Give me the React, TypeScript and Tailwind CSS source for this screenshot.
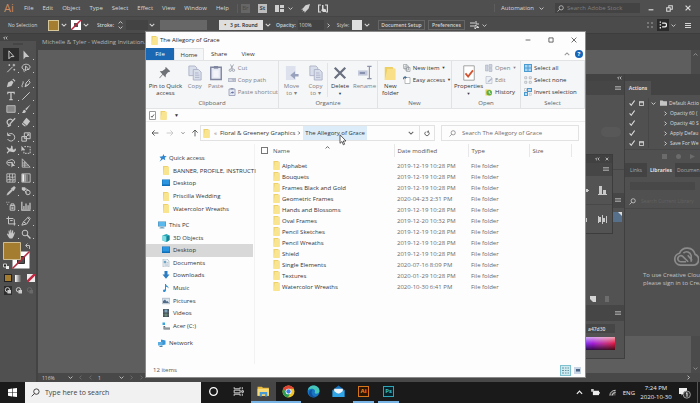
import React, { useState } from 'react';

const menus = ['File', 'Edit', 'Object', 'Type', 'Select', 'Effect', 'View', 'Window', 'Help'];

const quickAccess = [
  { name: 'BANNER, PROFILE, INSTRUCTI', icon: 'folder' },
  { name: 'Desktop', icon: 'desktop' },
  { name: 'Priscilla Wedding', icon: 'folder' },
  { name: 'Watercolor Wreaths', icon: 'folder' },
];

const thisPc = [
  { name: '3D Objects', icon: 'cube' },
  { name: 'Desktop', icon: 'desktop' },
  { name: 'Documents', icon: 'document' },
  { name: 'Downloads', icon: 'download' },
  { name: 'Music', icon: 'music' },
  { name: 'Pictures', icon: 'picture' },
  { name: 'Videos', icon: 'video' },
  { name: 'Acer (C:)', icon: 'drive' },
];

const folders = [
  { name: 'Alphabet', date: '2019-12-19 10:28 PM' },
  { name: 'Bouquets', date: '2019-12-19 10:28 PM' },
  { name: 'Frames Black and Gold', date: '2019-12-19 10:28 PM' },
  { name: 'Geometric Frames', date: '2020-04-23 2:31 PM' },
  { name: 'Hands and Blossoms', date: '2019-12-19 10:28 PM' },
  { name: 'Oval Frames', date: '2019-12-20 10:32 PM' },
  { name: 'Pencil Sketches', date: '2019-12-19 10:28 PM' },
  { name: 'Pencil Wreaths', date: '2019-12-19 10:28 PM' },
  { name: 'Shield', date: '2019-12-19 10:28 PM' },
  { name: 'Single Elements', date: '2020-07-16 8:09 PM' },
  { name: 'Textures', date: '2020-01-29 10:28 PM' },
  { name: 'Watercolor Wreaths', date: '2020-10-30 6:41 PM' },
];

const actions = [
  { name: 'Default Actio', dialog: true, set: true },
  { name: 'Opacity 60 (', dialog: false, set: false },
  { name: 'Opacity 40 S', dialog: false, set: false },
  { name: 'Apply Defau', dialog: false, set: false },
  { name: 'Save For We', dialog: true, set: false },
];

const stroke = { fill: 'none', stroke: 'currentColor', strokeWidth: 1.2 };

// Tool glyphs, all on a 12 x 12 grid
const toolGroups: { name: string; art: React.ReactNode }[][] = [
  [
    { name: 'Selection', art: <path d="M3.5 1v9.5l2.4-2.6H9.500z" {...stroke} /> },
    { name: 'Direct selection', art: <path d="M3 .5v11l2.600-3H10z" fill="currentColor" /> },
    { name: 'Magic wand', art: <path d="M1.500 11 8 4.500M9.500 1v3M8 2.500h3M4 1.500v2M3 2.500h2M10 7v2M9 8h2" {...stroke} /> },
    { name: 'Lasso', art: <path d="M4 8C1 7.500.5 5 2 3.200 4 .8 9 1 10.500 3.500c.8 1.600 0 3-1 3.500M4 8c-1 1-.5 2 .5 3M5.500 3.500v6l1.600-1.700H9.500z" {...stroke} /> },
  ],
  [
    { name: 'Pen', art: <path d="M1 11 2.500 5.500 7 3l2 2-2.500 4.500zM7.500 1.500l3 3 .8-1.200L8.800.8zM1 11l4-4" fill="currentColor" /> },
    { name: 'Curvature', art: <path d="M1.500 11C0 8 3.500 7 2.500 4M5 10.500 6 6l3-3 2 2-2.500 3.500zM9 3l1-1.500M5 10.500l2.500-3" {...stroke} /> },
    { name: 'Type', art: <path d="M1.500 1h9v3h-1L9 2.300H6.800v7.400l1.400.3v1H3.800v-1l1.400-.3V2.300H3L2.500 4h-1z" fill="currentColor" /> },
    { name: 'Line', art: <path d="M1.500 10.500l9-9" {...stroke} /> },
    { name: 'Rectangle', art: <path d="M1 2h10v8H1z" fill="#858585" stroke="currentColor" /> },
    { name: 'Paintbrush', art: <path d="M11.500.5 5 6l1.500 1.500zM4.300 6.800C2 7 3 9.500 1 10.500c2.500 1 5 0 4.800-2.200z" fill="currentColor" /> },
    { name: 'Shaper', art: <path d="M8 4.500A3.500 3.500 0 1 0 6 9.500M4.500 8.500l6.500-7M4 9l-1 2 2-1" {...stroke} strokeWidth={1.5} /> },
    { name: 'Eraser', art: <path d="M6.500 1 11 5 7 10.500 2.200 6.300zM1.800 7l4.500 4H4L1 8.500z" fill="currentColor" /> },
  ],
  [
    { name: 'Rotate', art: <path d="M2.500 3.500a4.500 4.500 0 1 1-.5 5M2 .8v3.400h3.500" {...stroke} /> },
    { name: 'Scale', art: <path d="M4 1h7v7H4zM1 5.500h5.500V11H1zM5.500 6.500l4-4M7 2.500h2.500V5" {...stroke} /> },
    { name: 'Warp', art: <path d="M.5 3C3 2 4 6 5.500 4S5 .5 7 1s0 4 2 4.500 1-2 2.500-1-1 5-4 4-4-1-5.500 2L.8 9 3 7z" fill="currentColor" /> },
    { name: 'Free transform', art: <g><path d="M4 2h7v8H3.500V6" {...stroke} strokeDasharray="2 1.200" /><path d="M.5 1v6.500L2.300 6H5z" fill="currentColor" /></g> },
    { name: 'Shape builder', art: <g><path d="M5 8.500a3 3 0 1 1-.5-5.800 3.500 3.500 0 0 1 5.500 4M2 5.500h6" {...stroke} /><path d="M6.500 4.500v7l1.800-1.800h2.600z" fill="currentColor" /></g> },
    { name: 'Perspective grid', art: <path d="M1.500 1v10h9.500L1.500 1M1.500 6h5M4.500 4v7M1.500 8.500h7.500" {...stroke} strokeWidth={1} /> },
  ],
  [
    { name: 'Mesh', art: <path d="M1 1h10v10H1zM1 5c3-2 4 1.500 10-.5M1 8.500c4-2 6 1 10-.5M4.500 1c-1.500 4 1.500 6 0 10M8 1c-1.500 4 1.500 6 0 10" {...stroke} strokeWidth={1} /> },
    { name: 'Gradient', art: <g><path d="M1 1h10v10H1z" fill="#555" stroke="#ccc" /><path d="M1.500 1.500h2.500v9H1.500z" fill="#eee" /><path d="M4 1.500h2.500v9H4z" fill="#aaa" /><path d="M6.500 1.500h2v9h-2z" fill="#808080" /></g> },
    { name: 'Eyedropper', art: <path d="M1 11l1-2.500 4.500-4.500L8 5.500 3.500 10zM6 3l1-.5L9 .8c1.500-.8 2.800.8 2 2L9.500 5l-.5 1z" fill="currentColor" stroke="currentColor" strokeWidth=".5" /> },
    { name: 'Blend', art: <g><path d="M1 1.500h4l1 3-3 1.500-2-1.500z" fill="currentColor" /><circle cx="8.300" cy="7.800" r="2.700" {...stroke} /><path d="M4 5l3 4M5.500 3l4 2.500" {...stroke} /></g> },
  ],
  [
    { name: 'Symbol sprayer', art: <path d="M5 5.500h5.500V11H5zM6 5.500V3.500h3.500v2M.5 1.500h1M3 1.500h1M1.500 4h1M6.500 7.500h2.500M6.500 9.200h2.500" {...stroke} /> },
    { name: 'Column graph', art: <path d="M1 1v10h10.500M3.500 10V6M6 10V3M8.500 10V5M10.800 10V2" {...stroke} strokeWidth={1.5} /> },
  ],
  [
    { name: 'Artboard', art: <path d="M3 .5V9.500h8.500M.5 3H8.500l1.500 1.500V11.500M5 5.500h3" {...stroke} /> },
    { name: 'Slice', art: <path d="M1 11 3 7l6-6 2 2-4 6.500zM3 7l3 2M8 2l2 2" {...stroke} /> },
    { name: 'Hand', art: <path d="M1 6l1.300-.5L3.500 7 3 2l1.200-.2.8 3.700V.8h1.200l.4 4.700L7.500 1.500l1.200.2-.3 4.300L9.800 4l1 .3L9 9l-1.500 2.500h-3L3 9.500z" fill="currentColor" /> },
    { name: 'Zoom', art: <g><circle cx="4.800" cy="4.800" r="3.400" {...stroke} /><path d="M7.300 7.300l4 4" {...stroke} strokeWidth={1.7} /></g> },
  ],
];

const Chevron: React.FC<{ dir?: string; className?: string }> = ({ dir = 'down', className = 'w-[6px] h-[6px]' }) => {
  const paths: Record<string, string> = {
    down: 'M1 2.500l3 3 3-3',
    up: 'M1 5.500l3-3 3 3',
    right: 'M2.500 1l3 3-3 3',
    left: 'M5.500 1l-3 3 3 3',
  };
  return (
    <svg viewBox="0 0 8 8" className={`shrink-0 ${className}`}>
      <path d={paths[dir]} fill="none" stroke="currentColor" strokeWidth="1.400" />
    </svg>
  );
};

const Folder: React.FC<{ className?: string }> = ({ className = 'w-[7px] h-[9px]' }) => (
  <svg viewBox="0 0 7 9" className={`shrink-0 ${className}`}>
    <path d="M.5 0H5l.6.8H6.500V8.500H.5z" fill="#ecd06b" />
    <path d="M1.800 1H6.500v8H.5z" fill="#f9e48f" />
  </svg>
);

const Magnifier: React.FC<{ className?: string }> = ({ className = 'w-[7px] h-[7px]' }) => (
  <svg viewBox="0 0 10 10" className={`shrink-0 ${className}`}>
    <circle cx="6" cy="4" r="3" fill="none" stroke="currentColor" />
    <path d="M3.900 6.100L.7 9.300" stroke="currentColor" />
  </svg>
);

const PanelMenu: React.FC = () => (
  <button aria-label="Panel menu" className="text-[#959595]">
    <svg viewBox="0 0 6 5" className="w-[6px] h-[5px]">
      <path d="M0 .5h6M0 2h6M0 3.500h6" stroke="currentColor" />
    </svg>
  </button>
);

const Collapse: React.FC = () => (
  <svg viewBox="0 0 6 4" className="w-[5px] h-[4px] shrink-0">
    <path d="M2.500.3L.8 2l1.700 1.700M5.200.3L3.500 2l1.700 1.700" fill="none" stroke="#d5d5d5" />
  </svg>
);

const NavIcon: React.FC<{ icon: string }> = ({ icon }) => {
  if (icon === 'folder') return <Folder className="w-[8px] h-[9px]" />;
  return (
    <svg viewBox="0 0 16 16" className="w-[8px] h-[8px] shrink-0">
      {icon === 'star' && <path d="M9 0l1.500 4 5 .5-4 3 1 5-4.500-2.500L1 15.500l3.500-6L1 5.500l6-1z" fill="#2f86cf" />}
      {icon === 'pc' && <g><path d="M0 1h16v10H0z" fill="#4e86ad" /><path d="M1 2h14v8H1z" fill="#5bb8ec" /><path d="M5 12h6v1h2v2H3v-2h2z" fill="#7ba6c2" /></g>}
      {icon === 'desktop' && <g><path d="M0 1h16v13H0z" fill="#0f6fb9" /><path d="M1 2h14v9H1z" fill="#2b95e0" /></g>}
      {icon === 'cube' && <g><path d="M1 3l8-3 6 3v9l-6 4-8-3z" fill="#2ba8b8" /><path d="M1 3l8 2v11l-8-3z" fill="#7fdde4" /><path d="M9 5l6-2v9l-6 4z" fill="#168294" /></g>}
      {icon === 'document' && <g><path d="M2 0h8l4 4v12H2z" fill="#eef2f5" stroke="#8fa0ad" /><path d="M4 4h4v4H4zM5 10h7M5 12.500h7M9.500 7h3" fill="#5aa0cf" stroke="#8aa8bd" /></g>}
      {icon === 'download' && <path d="M5 0h6v7h4l-7 8.500L1 7h4z" fill="#2b7cc0" />}
      {icon === 'music' && <path d="M6 0h2c0 4 6 4 5 9-1-3-3-3-5-3.500V12c0 3-2 4-4 4s-3-3-1-4.500c1-.8 2-.8 3-.5z" fill="#2e8fd6" />}
      {icon === 'picture' && <g><path d="M.5 2.500h15v11H.5z" fill="#d8e4ee" stroke="#8494a5" /><path d="M2 12V8l4-3 3 4 2-1 3 4z" fill="#506b8a" /></g>}
      {icon === 'video' && <g><path d="M2 0h12v16H2z" fill="#3c4650" /><path d="M5 1h6v6H5z" fill="#7ea5b8" /><path d="M5 9h6v6H5z" fill="#688b75" /><path d="M3.500 1v14M12.500 1v14" stroke="#aab" strokeDasharray="1.500 1.500" /></g>}
      {icon === 'drive' && <g><path d="M1 1h5v5H1z" fill="#37a5dc" /><path d="M3 8h3l1 3h9v4H3z" fill="#5f686e" /><path d="M4 11h12v2H4z" fill="#bfc7cb" /></g>}
      {icon === 'network' && <g><path d="M6 1l9 2v8l-9 2z" fill="#3a95d6" /><path d="M0 6h9v7H0z" fill="#5aaee2" /><path d="M3 14h6v2H3z" fill="#57809c" /></g>}
    </svg>
  );
};

const BigButton: React.FC<{ label: string[]; width: string; muted?: boolean; arrow?: boolean; children: React.ReactNode }> = ({
  label, width, muted, arrow, children,
}) => (
  <button className={`flex flex-col items-center justify-start pt-[4px] leading-[7px] whitespace-nowrap ${width} ${muted ? 'text-[#7d7f85]' : 'text-[#333]'}`}>
    <svg viewBox="0 0 16 18" className="w-[14px] h-[16px] mb-[2px]">{children}</svg>
    {label.map((line) => <span key={line}>{line}</span>)}
    {arrow && <span className="text-[4px]">▼</span>}
  </button>
);

const SmallButton: React.FC<{ label: string; muted?: boolean; arrow?: boolean; children: React.ReactNode }> = ({
  label, muted, arrow, children,
}) => (
  <button className={`flex items-center gap-[2px] h-[12px] whitespace-nowrap ${muted ? 'text-[#7d7f85]' : 'text-[#333]'}`}>
    <svg viewBox="0 0 16 16" className="w-[8px] h-[8px] shrink-0">{children}</svg>
    {label}
    {arrow && <span className="text-[4px]">▼</span>}
  </button>
);

const RibbonGroup: React.FC<{ title: string; width: string; children: React.ReactNode }> = ({ title, width, children }) => (
  <section className={`flex flex-col border-r border-[#e0e2e4] ${width}`}>
    <div className="flex flex-1">{children}</div>
    <h3 className="h-[9px] leading-[8px] text-center text-[#5c5f63]">{title}</h3>
  </section>
);

const pages = (
  <g stroke="#aab0c6" fill="#d9deeb">
    <path d="M1 1h7l2 2v9H1z" />
    <path d="M6 5h6l3 3v9H6z" />
    <path d="M8 9h4M8 11.500h5M8 14h5" />
  </g>
);

const Ribbon: React.FC = () => (
  <div className="flex h-[49px] bg-[#f5f6f7] border-y border-[#e1e3e5]">
    <RibbonGroup title="Clipboard" width="w-[133px]">
      <BigButton label={['Pin to Quick', 'access']} width="w-[39px]">
        <path d="M9 2l5 5-1.500 1-.8-.2L9 11l-.3 3L5.500 11 2 15l-.5-.5L5 10.500 2 7l3-.2L8.500 4l-.2-1z" fill="#6f7277" />
      </BigButton>
      <BigButton label={['Copy']} width="w-[20px]" muted>{pages}</BigButton>
      <BigButton label={['Paste']} width="w-[22px]" muted>
        <path d="M2 2.500h12v14H2z" fill="#e4e8f2" stroke="#8086a0" strokeWidth="1.600" />
        <path d="M5.500 1h5v3h-5z" fill="#8086a0" />
        <path d="M5 6h6v8H5z" fill="#f2f4fa" />
      </BigButton>
      <div className="flex flex-col pt-[1px] pl-[1px]">
        <SmallButton label="Cut" muted>
          <path d="M5 1l4 9M11 1L6 10" stroke="#8a8f9f" strokeWidth="1.500" />
          <circle cx="4.500" cy="12.500" r="2.300" fill="none" stroke="#8a8f9f" strokeWidth="1.500" />
          <circle cx="11" cy="12.500" r="2.300" fill="none" stroke="#8a8f9f" strokeWidth="1.500" />
        </SmallButton>
        <SmallButton label="Copy path" muted>
          <path d="M0 4h16v8H0z" fill="#b4bac9" />
          <path d="M2 6l2 4 2-4 1 4M9 9h1M12 9h1" fill="none" stroke="#fff" />
        </SmallButton>
        <SmallButton label="Paste shortcut" muted>
          <path d="M2 2h12v13H2z" fill="#e7ebf5" stroke="#8c93ad" strokeWidth="1.500" />
          <path d="M5 0h6v3H5z" fill="#8c93ad" />
          <path d="M5 12c0-3 1-4 4-4V6l3 3-3 3v-2c-2 0-3 0-4 2z" fill="#6675a6" />
        </SmallButton>
      </div>
    </RibbonGroup>
    <RibbonGroup title="Organize" width="w-[99px]">
      <BigButton label={['Move', 'to ▾']} width="w-[25px]" muted>
        <path d="M1 1h11v16H1z" fill="#dde1ed" />
        <path d="M15.500 10h-4V7L6 11.500l5.500 4.500v-3h4z" fill="#98a1bd" />
      </BigButton>
      <BigButton label={['Copy', 'to ▾']} width="w-[23px]" muted>{pages}</BigButton>
      <div className="w-px h-[34px] mt-[2px] bg-[#e2e4e6]" />
      <BigButton label={['Delete']} width="w-[24px]" arrow>
        <path d="M2 3l12 12M14 3L2 15" stroke="#6b7080" strokeWidth="2.600" />
      </BigButton>
      <BigButton label={['Rename']} width="w-[25px]" muted>
        <path d="M0 6h11v6H0z" fill="#c4cadb" />
        <path d="M2 9h6" stroke="#7f89a8" strokeWidth="2" />
        <path d="M10.500 1.500h5M13 1.500v14M10.500 15.500h5" stroke="#8d94a8" strokeWidth="1.300" />
      </BigButton>
    </RibbonGroup>
    <RibbonGroup title="New" width="w-[74px]">
      <BigButton label={['New', 'folder']} width="w-[25px]">
        <path d="M2 2h9l1 2h2v13H2z" fill="#ecce62" />
        <path d="M5 4h9v13H2z" fill="#f9e088" />
      </BigButton>
      <div className="flex flex-col pt-[1px]">
        <SmallButton label="New item" arrow>
          <path d="M1 1h7v8H1zM4 4h7v8H4zM7 7h7v8H7z" fill="#eef1f3" stroke="#8b9095" strokeWidth="1.200" />
        </SmallButton>
        <SmallButton label="Easy access" arrow>
          <path d="M4 3h10v12H4z" fill="#fff" stroke="#8b9095" strokeWidth="1.200" />
          <path d="M0 6c0-4 2-5 4-5V0l4 3-4 3V4C2 4 2 5 2 7z" fill="#456c93" />
        </SmallButton>
      </div>
    </RibbonGroup>
    <RibbonGroup title="Open" width="w-[69px]">
      <BigButton label={['Properties']} width="w-[33px]" arrow>
        <path d="M2 .8h12v16.400H2z" fill="#fff" stroke="#989898" />
        <path d="M4 9.500l3 3.500 5.500-7" fill="none" stroke="#d2522e" strokeWidth="2" />
      </BigButton>
      <div className="flex flex-col pt-[1px]">
        <SmallButton label="Open" muted arrow>
          <path d="M1 2h5v12H1zM8 1h6v6H8zM8 9h6v6H8z" fill="#cbd1df" stroke="#a2a9bb" />
        </SmallButton>
        <SmallButton label="Edit" muted>
          <path d="M2 1h9l3 3v11H2z" fill="#edf0f5" stroke="#a2a9bb" />
          <path d="M5 13l1-3 7-6 2 2-7 6z" fill="#b3bacd" />
        </SmallButton>
        <SmallButton label="History">
          <path d="M1 3h9l3 3v9H1z" fill="#e6cf56" />
          <circle cx="8.500" cy="9.500" r="5.500" fill="#5cae49" />
          <path d="M8.500 6v4l3 1" fill="none" stroke="#fff" strokeWidth="1.500" />
        </SmallButton>
      </div>
    </RibbonGroup>
    <RibbonGroup title="Select" width="flex-1">
      <div className="flex flex-col pt-[1px] pl-[3px]">
        <SmallButton label="Select all">
          <path d="M0 0h16v16H0z" fill="#4b9bd3" />
          <path d="M2 2h5v5H2zM9 2h5v5H9zM2 9h5v5H2zM9 9h5v5H9z" fill="#a9d5f2" />
        </SmallButton>
        <SmallButton label="Select none">
          <path d="M1.500 1.500h4v4h-4zM10.500 1.500h4v4h-4zM1.500 10.500h4v4h-4zM10.500 10.500h4v4h-4z" fill="#fff" stroke="#9ba3ab" strokeWidth="1.300" />
        </SmallButton>
        <SmallButton label="Invert selection">
          <path d="M6 0h10v8H6zM0 8h8v8H0z" fill="#4b9bd3" />
          <path d="M8 2h6v4H8zM2 10h4v4H2z" fill="#b9def5" />
          <path d="M1 1h4v5H1zM10.500 10.500h4v4h-4z" fill="#fff" stroke="#9ba3ab" />
        </SmallButton>
      </div>
    </RibbonGroup>
  </div>
);

const Explorer: React.FC = () => {
  const [location, setLocation] = useState('Desktop');

  return (
    <div className="absolute z-10 left-[145px] right-[114px] top-[31px] bottom-[25px] flex flex-col bg-[#fdfdfd] border border-[#8a8a8a] text-[6px] leading-[8px] text-[#333]">
      <header className="flex items-center h-[16px] pl-[5px]">
        <Folder />
        <h1 className="pl-[2px] text-[#222]">The Allegory of Grace</h1>
        <div className="flex ml-auto text-[#333]">
          {[
            { name: 'Minimize', d: 'M1 5h8' },
            { name: 'Maximize', d: 'M1.500 1.500h7v7h-7z' },
            { name: 'Close', d: 'M1 1l8 8M9 1L1 9' },
          ].map((b) => (
            <button key={b.name} aria-label={b.name} className="flex items-center justify-center w-[23px] h-[16px]">
              <svg viewBox="0 0 10 10" className="w-[6px] h-[6px]"><path d={b.d} {...stroke} /></svg>
            </button>
          ))}
        </div>
      </header>

      <nav className="flex items-stretch h-[12px]">
        <button className="w-[28px] bg-[#1a67b4] text-white">File</button>
        <button className="w-[30px] bg-[#f5f6f7] border-x border-t border-[#e1e3e5]">Home</button>
        <button className="w-[30px]">Share</button>
        <button className="w-[28px]">View</button>
        <div className="flex items-center gap-[5px] ml-auto pr-[2px] text-[#999]">
          <Chevron dir="up" />
          <button aria-label="Help" className="w-[8px] h-[8px] rounded-full bg-[#1665b8] text-white font-bold leading-[8px]">?</button>
        </div>
      </nav>

      <Ribbon />

      <div className="flex items-center gap-[4px] h-[13px] pl-[3px] border-b border-[#ececec]">
        <svg viewBox="0 0 7 9" className="w-[7px] h-[9px]">
          <path d="M.5.5h6v8h-6z" fill="#fff" stroke="#9a9a9a" />
          <path d="M2 5l1 1.300L5 3.500" fill="none" stroke="#666" />
        </svg>
        <Folder />
        <button aria-label="Customize" className="pl-[3px] text-[5px]">▼</button>
      </div>

      <div className="flex items-center h-[22px] pl-[5px] pr-[6px]">
        <div className="flex items-center gap-[7px] w-[49px] text-[#555]">
          <button aria-label="Back"><svg viewBox="0 0 10 8" className="w-[8px] h-[6px]"><path d="M9.500 4H1M4.500.5L1 4l3.500 3.500" {...stroke} /></svg></button>
          <button aria-label="Forward" className="text-[#c5c5c5]"><svg viewBox="0 0 10 8" className="w-[8px] h-[6px]"><path d="M.5 4H9M5.500.5L9 4 5.500 7.500" {...stroke} /></svg></button>
          <button aria-label="Recent locations"><Chevron className="w-[4px] h-[4px]" /></button>
          <button aria-label="Up"><svg viewBox="0 0 8 10" className="w-[6px] h-[8px]"><path d="M4 9.500V1M.5 4.500L4 1l3.500 3.500" {...stroke} /></svg></button>
        </div>
        <div className="flex items-center flex-1 h-[16px] pl-[2px] border border-[#e2e2e2]">
          <Folder />
          <span className="pl-[4px] pr-[3px] text-[#777]">«</span>
          <a href="#graphics" className="whitespace-nowrap">Floral &amp; Greenery Graphics</a>
          <Chevron dir="right" className="w-[4px] h-[4px] mx-[2px]" />
          <a href="#grace" className="px-[2px] leading-[14px] bg-[#dcecf8] whitespace-nowrap">The Allegory of Grace</a>
          <button aria-label="Previous locations" className="ml-auto mr-[5px] text-[#666]"><Chevron /></button>
          <button aria-label="Refresh" className="flex items-center justify-center w-[15px] h-[14px] border-l border-[#e2e2e2]">
            <svg viewBox="0 0 10 10" className="w-[6px] h-[7px]"><path d="M7 2a3.600 3.600 0 1 1-4 0M7.200 0v2.500H4.800" {...stroke} /></svg>
          </button>
        </div>
        <label className="flex items-center gap-[6px] w-[138px] h-[16px] ml-[6px] pl-[7px] border border-[#e2e2e2] text-[#777]">
          <Magnifier />
          <input aria-label="Search folder" placeholder="Search The Allegory of Grace" className="w-full min-w-0 bg-transparent outline-none placeholder:text-[#6d6d6d]" />
        </label>
      </div>

      <div className="flex flex-1 min-h-0">
        <aside className="w-[109px] shrink-0 pt-[8px] border-r border-[#f2f2f2]">
          <div className="grid auto-rows-fr h-[63px]">
            <a href="#quick" className="flex items-center gap-[2px] pl-[13px]"><NavIcon icon="star" />Quick access</a>
            {quickAccess.map((item) => (
              <a key={item.name} href="#quick" className="flex items-center gap-[3px] pl-[16px] whitespace-nowrap">
                <NavIcon icon={item.icon} />{item.name}
              </a>
            ))}
          </div>
          <div className="grid auto-rows-fr h-[113px] mt-[4px]">
            <a href="#pc" className="flex items-center gap-[3px] pl-[12px]"><NavIcon icon="pc" />This PC</a>
            {thisPc.map((item) => (
              <button
                key={item.name}
                onClick={() => setLocation(item.name)}
                className={`flex items-center gap-[3px] pl-[16px] mr-[1px] ${location === item.name ? 'bg-[#d8d8d8]' : ''}`}
              >
                <NavIcon icon={item.icon} />{item.name}
              </button>
            ))}
          </div>
          <a href="#network" className="flex items-center gap-[3px] h-[13px] mt-[4px] pl-[12px]"><NavIcon icon="network" />Network</a>
        </aside>

        <div className="flex-1 pl-[6px]">
          <table className="w-full table-fixed border-collapse text-left">
            <colgroup>
              <col className="w-[12px]" />
              <col className="w-[121px]" />
              <col className="w-[74px]" />
              <col className="w-[61px]" />
              <col className="w-[42px]" />
              <col />
            </colgroup>
            <thead>
              <tr className="h-[13px] text-[#555]">
                <th className="p-0"><input type="checkbox" aria-label="Select all items" className="block appearance-none w-[7px] h-[7px] border border-[#777]" /></th>
                <th className="p-0 font-normal border-r border-[#e8e8e8]">
                  <div className="flex items-start">
                    <span className="w-[52px]">Name</span>
                    <Chevron dir="up" className="w-[5px] h-[5px] -mt-[2px]" />
                  </div>
                </th>
                <th className="p-0 pl-[3px] font-normal border-r border-[#e8e8e8]">Date modified</th>
                <th className="p-0 pl-[3px] font-normal border-r border-[#e8e8e8]">Type</th>
                <th className="p-0 pl-[3px] font-normal border-r border-[#e8e8e8]">Size</th>
                <th className="p-0"></th>
              </tr>
              <tr className="h-[3px]"></tr>
            </thead>
            <tbody>
              {folders.map((folder) => (
                <tr key={folder.name} className="h-[11px] text-[#6a6a6a]">
                  <td className="p-0"></td>
                  <td className="p-0 text-[#333]"><div className="flex items-center gap-[2px]"><Folder />{folder.name}</div></td>
                  <td className="p-0 pl-[3px]">{folder.date}</td>
                  <td className="p-0 pl-[3px]">File folder</td>
                  <td className="p-0"></td>
                  <td className="p-0"></td>
                </tr>
              ))}
            </tbody>
          </table>
        </div>
      </div>

      <footer className="flex items-center h-[12px] pl-[7px] pr-[4px] mb-[1px] text-[#555]">
        12 items
        <div className="flex items-center gap-[3px] ml-auto">
          <button aria-label="Details view" className="w-[11px] h-[11px] bg-[#cdeaf0] border border-[#7fc1cf]">
            <svg viewBox="0 0 9 9" className="w-[9px] h-[9px]"><path d="M1 2h2M1 4.500h2M1 7h2M4 2h1.500M4 4.500h1.500M4 7h1.500M6.500 2H8M6.500 4.500H8M6.500 7H8" stroke="#6d94a0" /></svg>
          </button>
          <button aria-label="Thumbnail view" className="w-[7px] h-[7px]">
            <svg viewBox="0 0 7 7" className="w-[7px] h-[7px]"><path d="M0 0h7v7H0z" fill="#c9d6e6" /><path d="M2 2h4v2.500H2z" fill="#4a6384" /></svg>
          </button>
        </div>
      </footer>

      <svg viewBox="0 0 8 12" className="absolute left-[193px] top-[102px] w-[8px] h-[12px]">
        <path d="M1 .8v8.500l2-1.800 1.300 3.300 1.300-.6L4.300 7H7z" fill="#fff" stroke="#333" strokeWidth=".8" />
      </svg>
    </div>
  );
};

const MenuBar: React.FC = () => (
  <header className="flex items-center h-[17px] pl-[4px] bg-[#4f4f4f] border-b border-[#454545] text-[6px] leading-[8px] text-[#d9d9d9]">
    <span className="w-[20px] text-[11px] leading-[14px] text-[#d08a5c]">Ai</span>
    <nav className="flex gap-[9px]">
      {menus.map((menu) => <button key={menu}>{menu}</button>)}
    </nav>
    <div className="flex items-center gap-[8px] ml-[8px] pl-[3px] border-l border-[#5d5d5d]">
      <button className="w-[9px] h-[9px] bg-[#666] text-[#484848] leading-[9px]">Br</button>
      <button className="w-[9px] h-[9px] bg-[#bdbdbd] text-[#4a4a4a] leading-[9px] font-bold">St</button>
      <button aria-label="Arrange documents" className="flex items-center gap-[4px]">
        <svg viewBox="0 0 9 7" className="w-[9px] h-[7px]"><path d="M0 0h4v7H0zM5 0h4v3H5zM5 4h4v3H5z" fill="#cfcfcf" /></svg>
        <Chevron className="w-[5px] h-[5px]" />
      </button>
      <button aria-label="GPU performance">
        <svg viewBox="0 0 10 10" className="w-[9px] h-[9px]"><path d="M10 0L8.500 5 5 8.500 4.300 10 3.500 7.500 1.500 8.500 2.500 6.500 0 5.700 2 5 5 1.500z" fill="#cfcfcf" /></svg>
      </button>
      <button aria-label="Touch workspace">
        <svg viewBox="0 0 10 9" className="w-[10px] h-[9px]"><path d="M3 1H.6v7H3M7 1h2.400v7H8" {...stroke} /><path d="M4 1h1.500v3.500L8 5.500V8H5L3 6l1-.5z" fill="currentColor" /></svg>
      </button>
    </div>
    <div className="flex items-center ml-auto">
      <button className="flex items-center gap-[5px] pl-[6px] border-l border-[#5d5d5d]">Automation<Chevron className="w-[5px] h-[5px]" /></button>
      <label className="flex items-center gap-[3px] w-[85px] h-[10px] ml-[11px] pl-[2px] bg-[#434343]">
        <Magnifier />
        <input aria-label="Search Adobe Stock" placeholder="Search Adobe Stock" className="w-full min-w-0 bg-transparent outline-none placeholder:text-[#808080]" />
      </label>
      <div className="flex items-center gap-[12px] pl-[8px] pr-[9px]">
        <button aria-label="Minimize"><svg viewBox="0 0 10 10" className="w-[6px] h-[6px]"><path d="M1 8h8" {...stroke} strokeWidth={2} /></svg></button>
        <button aria-label="Restore"><svg viewBox="0 0 10 10" className="w-[7px] h-[7px]"><path d="M1 4h5v5H1zM4 4V1h5v5H6" {...stroke} strokeWidth={1.5} /></svg></button>
        <button aria-label="Close"><svg viewBox="0 0 10 10" className="w-[6px] h-[6px]"><path d="M1 1l8 8M9 1L1 9" {...stroke} strokeWidth={2} /></svg></button>
      </div>
    </div>
  </header>
);

const ControlBar: React.FC = () => (
  <div className="flex items-center h-[16px] pl-[8px] bg-[#4b4b4b] text-[5px] leading-[8px] text-[#d5d5d5] whitespace-nowrap">
    <span className="w-[40px]">No Selection</span>
    <button aria-label="Fill" className="flex items-center gap-[2px]">
      <span className="w-[11px] h-[11px] bg-[#a47d30] border border-[#d6c79a]" /><Chevron />
    </button>
    <button aria-label="Stroke colour" className="flex items-center gap-[2px] ml-[4px]">
      <svg viewBox="0 0 10 10" className="w-[10px] h-[10px]"><path d="M0 0h10v10H0z" fill="#fff" /><path d="M3 3h4v4H3z" fill="#555" /><path d="M0 10L10 0" stroke="#c22540" strokeWidth="1.500" /></svg>
      <Chevron />
    </button>
    <label htmlFor="stroke-width" className="w-[21px] ml-[8px] font-semibold">Stroke:</label>
    <button aria-label="Stroke stepper" className="flex flex-col"><Chevron dir="up" className="w-[5px] h-[5px]" /><Chevron className="w-[5px] h-[5px]" /></button>
    <input id="stroke-width" className="w-[22px] h-[10px] ml-[3px] bg-[#434343] outline-none" />
    <button aria-label="Stroke weights" className="ml-[1px]"><Chevron /></button>
    <button aria-label="Width profile" className="w-[47px] h-[10px] ml-[5px] bg-[#676767]" />
    <button className="w-[44px] h-[10px] ml-[12px] bg-[#dedede] text-[#222] font-semibold">•&nbsp;&nbsp; 3 pt. Round</button>
    <Chevron className="w-[6px] h-[6px] ml-[2px]" />
    <label htmlFor="opacity" className="w-[22px] ml-[5px] font-semibold">Opacity:</label>
    <input id="opacity" defaultValue="100%" className="w-[26px] h-[10px] px-[1px] bg-[#434343] outline-none" />
    <Chevron dir="right" className="w-[5px] h-[5px] ml-[2px]" />
    <button className="flex items-center gap-[2px] ml-[5px]">
      <span className="w-[14px]">Style:</span><span className="w-[10px] h-[10px] bg-[#dedede]" /><Chevron />
    </button>
    <button className="w-[47px] h-[10px] ml-[8px] leading-none border border-[#656565] font-semibold">Document Setup</button>
    <button className="w-[37px] h-[10px] ml-[3px] leading-none border border-[#656565] font-semibold">Preferences</button>
    <button aria-label="Align to" className="flex items-center gap-[3px] ml-[5px]">
      <svg viewBox="0 0 9 8" className="w-[9px] h-[8px]"><path d="M0 2h5M0 5h4M6 0v3h3M5 4v4l1.500-1.500H9z" fill="none" stroke="currentColor" /></svg>
      <Chevron className="w-[5px] h-[5px]" />
    </button>
    <div className="flex items-center ml-auto pr-[9px]">
      <svg viewBox="0 0 6 6" className="w-[6px] h-[6px] text-[#777]"><path d="M0 0h2v2H0zM4 0h2v2H4zM0 4h2v2H0zM4 4h2v2H4z" fill="currentColor" /></svg>
      <button aria-label="Snap" className="flex items-center justify-center w-[12px] h-[12px] ml-[4px] bg-[#2a2a2a]">
        <svg viewBox="0 0 9 8" className="w-[8px] h-[8px]"><path d="M1.500 0v8" stroke="#eee" strokeWidth="1.500" strokeDasharray="1.600 1.500" /><path d="M3.500 2h3a2 2 0 0 1 0 4h-3" fill="none" stroke="#eee" strokeWidth="1.400" /></svg>
      </button>
      <Chevron className="w-[5px] h-[5px] ml-[2px]" />
      <button aria-label="Control menu" className="ml-[9px]"><svg viewBox="0 0 6 5" className="w-[6px] h-[5px]"><path d="M0 .5h6M0 2.500h6M0 4.500h6" stroke="currentColor" /></svg></button>
    </div>
  </div>
);

const Toolbox: React.FC = () => (
  <aside className="flex flex-col w-[38px] shrink-0 bg-[#505050] border-r-2 border-[#434343] text-[#c6c6c6]">
    <div className="flex items-center h-[7px] pl-[3px] bg-[#434343]"><Collapse /></div>
    <div className="w-[10px] h-[2px] mx-auto mt-[2px] mb-[3px] bg-[#454545]" />
    <div className="flex flex-col gap-[2px] pl-[3px]">
      {toolGroups.map((group, i) => (
        <div key={i} className="grid grid-cols-2 w-[31px]">
          {group.map((tool) => (
            <button
              key={tool.name}
              aria-label={tool.name}
              className={`relative flex items-center justify-center h-[13px] ${tool.name === 'Selection' ? 'bg-[#2e2e2e]' : ''}`}
            >
              <svg viewBox="0 0 12 12" className="w-[10px] h-[10px]">{tool.art}</svg>
              {tool.name !== 'Selection' && <span className="absolute right-0 bottom-[1px] w-px h-px bg-[#c6c6c6]" />}
            </button>
          ))}
        </div>
      ))}
    </div>
    <svg viewBox="0 0 30 30" className="w-[30px] h-[30px] mt-[1px] ml-[2px]">
      <path d="M10.500 10.500h17v17h-17z" fill="#fff" />
      <path d="M15.500 15.500h7v7h-7z" fill="#505050" stroke="#333" />
      <path d="M10.500 27.500l17-17" stroke="#b5283d" strokeWidth="1.500" />
      <path d="M1.500 1.500h17v17h-17z" fill="#a47d30" stroke="#d0bf95" />
      <path d="M24 4.500h3.500V8M25.500 2.500L23.500 4.500l2 2" fill="none" stroke="#bbb" />
      <path d="M1.500 23h3v3h-3z" fill="#222" stroke="#ccc" />
      <path d="M4 25h3v3H4z" fill="#eee" />
    </svg>
    <div className="flex items-center gap-[3px] mt-[3px] pl-[4px]">
      <button aria-label="Colour" className="w-[8px] h-[8px] bg-[#a47d30] border border-[#222]" />
      <button aria-label="Gradient" className="w-[7px] h-[7px] bg-linear-to-r from-white to-[#444]" />
      <button aria-label="None" className="ml-[2px]"><svg viewBox="0 0 8 8" className="w-[8px] h-[8px]"><path d="M0 0h8v8H0z" fill="#eee" /><path d="M0 8L8 0" stroke="#c22540" strokeWidth="2.500" /></svg></button>
    </div>
    <div className="flex items-center gap-[3px] mt-[4px] pl-[4px]">
      {['Draw normal', 'Draw behind', 'Draw inside'].map((mode, i) => (
        <button key={mode} aria-label={mode} className={`w-[8px] h-[9px] ${i === 0 ? 'bg-[#2e2e2e]' : ''} ${i === 2 ? 'opacity-20' : ''}`}>
          <svg viewBox="0 0 8 9" className="w-[8px] h-[9px]"><circle cx="3.500" cy="3.800" r="2.200" fill="none" stroke="#ccc" /><path d="M3.500 4h3.500v3.500H3.500z" fill="#ccc" /></svg>
        </button>
      ))}
    </div>
  </aside>
);

const AlignPanel: React.FC = () => (
  <section className="absolute z-[5] right-[87px] top-[120px] w-[60px] h-[80px] bg-[#535353] border border-[#3c3c3c] text-[#c9c9c9]">
    <div className="flex items-center justify-end gap-[5px] h-[8px] pr-[3px] bg-[#414141]">
      <Collapse />
      <button aria-label="Close panel"><svg viewBox="0 0 6 6" className="w-[4px] h-[4px]"><path d="M1 1l4 4M5 1L1 5" {...stroke} /></svg></button>
    </div>
    <div className="flex items-center justify-end h-[13px] pr-[3px] bg-[#464646]"><PanelMenu /></div>
    <div className="flex justify-end items-center gap-[9px] h-[29px] pr-[5px] border-b border-[#484848]">
      <svg viewBox="0 0 9 9" className="w-[9px] h-[9px]"><path d="M0 4.500h9" stroke="currentColor" /><path d="M1 1h3v7H1zM5 3h3v3H5z" fill="currentColor" /></svg>
      <svg viewBox="0 0 9 9" className="w-[9px] h-[9px]"><path d="M0 8.500h9" stroke="currentColor" /><path d="M1 0h3v8H1zM5 4h3v4H5z" fill="currentColor" /></svg>
    </div>
    <div className="flex justify-end items-center gap-[9px] h-[28px] pr-[5px]">
      <svg viewBox="0 0 9 9" className="w-[9px] h-[9px]"><path d="M4.500 0v9" stroke="currentColor" /><path d="M2 3h5v4H2z" fill="currentColor" /></svg>
      <svg viewBox="0 0 9 9" className="w-[9px] h-[9px]"><path d="M.5 1v7M4.500 0v9M8.500 1v7" stroke="currentColor" /><path d="M1 2h2v5H1zM5 3h2v4H5z" fill="currentColor" /></svg>
    </div>
  </section>
);

const ColourDock: React.FC = () => (
  <section className="flex flex-col w-[60px] h-[285px] bg-[#525252] border-r border-b border-[#3f3f3f] text-[5px] leading-[8px]">
    <div className="flex items-center justify-end h-[7px] pr-[2px] bg-[#434343]"><Collapse /></div>
    <div className="flex items-center justify-end h-[14px] pr-[3px] bg-[#464646]"><PanelMenu /></div>
    <div className="flex items-center h-[74px] pl-[36px]">
      <div className="w-[20px] h-[10px] rounded-full bg-[#585858]" />
    </div>
    <div className="h-[24px] border-t border-[#464646]" />
    <div className="flex items-center justify-end h-[15px] pr-[3px] bg-[#464646]"><PanelMenu /></div>
    <div className="flex justify-end h-[85px] pt-[4px] pr-[2px]">
      <svg viewBox="0 0 9 10" className="w-[9px] h-[10px]"><path d="M0 0h9v10H0z" fill="#56708c" /><path d="M5 0h4v4z" fill="#ddd" /></svg>
    </div>
    <div className="flex items-center justify-end gap-[8px] h-[12px] pr-[14px]">
      <svg viewBox="0 0 6 6" className="w-[6px] h-[6px]"><path d="M0 0h6v6H3L0 3z" fill="#d5d5d5" /></svg>
      <svg viewBox="0 0 6 6" className="w-[6px] h-[6px]"><path d="M1 0h4v6H1z" fill="#6d6d6d" /></svg>
    </div>
    <div className="flex items-center justify-end h-[16px] pr-[3px] bg-[#464646]"><PanelMenu /></div>
    <input aria-label="Hex colour" defaultValue="a47d30" className="w-[29px] h-[9px] mt-[3px] ml-[21px] pl-[2px] bg-[#464646] text-[#ddd] font-semibold outline-none" />
    <div className="w-[44px] h-[13px] mt-[4px] ml-[6px] bg-linear-to-r from-[#1f3cff] via-[#a418d8] to-[#e0123c]">
      <div className="h-full bg-linear-to-b from-white/60 via-transparent to-black/70" />
    </div>
  </section>
);

const ActionsDock: React.FC = () => (
  <section className="flex flex-col w-[75px] h-[262px] bg-[#505050] text-[6px] leading-[8px] text-[#dedede] overflow-hidden whitespace-nowrap">
    <div className="h-[7px] shrink-0 bg-[#434343]" />
    <div className="flex h-[14px] shrink-0 bg-[#434343]">
      <button className="w-[26px] bg-[#505050] text-[5px] font-bold">Actions</button>
    </div>
    <div className="flex flex-col h-[51px] shrink-0 mt-[3px]">
      {actions.map((action, i) => (
        <div key={action.name} className="flex items-center h-[10px] shrink-0">
          <span className="grid w-[14px] shrink-0 place-items-center">
            <input id={`action-${i}`} type="checkbox" defaultChecked className="peer col-start-1 row-start-1 appearance-none w-[6px] h-[6px]" />
            <svg viewBox="0 0 8 8" className="col-start-1 row-start-1 w-[6px] h-[6px] pointer-events-none invisible peer-checked:visible"><path d="M.8 4.500L3 7 7.500.8" {...stroke} strokeWidth={1.4} /></svg>
          </span>
          <span className="w-[10px] shrink-0 border-r border-[#474747] h-[10px] flex items-center">
            {action.dialog && <svg viewBox="0 0 6 6" className="w-[5px] h-[5px]"><path d="M.5.5h5v5h-5zM.5 2h5" fill="none" stroke="currentColor" /></svg>}
          </span>
          {action.set ? (
            <span className="flex items-center gap-[4px] pl-[2px] shrink-0"><Chevron className="w-[5px] h-[5px]" /><svg viewBox="0 0 8 6" className="w-[7px] h-[6px]"><path d="M0 0h3l1 1h4v5H0z" fill="#c5c5c5" /></svg></span>
          ) : (
            <span className="pl-[14px] shrink-0"><Chevron dir="right" className="w-[5px] h-[5px]" /></span>
          )}
          <label htmlFor={`action-${i}`} className="pl-[2px] text-[5px]">{action.name}</label>
        </div>
      ))}
    </div>
    <div className="flex items-center gap-[9px] h-[14px] shrink-0 pl-[37px] border-t border-[#474747] text-[#6b6b6b]">
      <svg viewBox="0 0 5 5" className="w-[5px] h-[5px]"><path d="M0 0h5v5H0z" fill="currentColor" /></svg>
      <svg viewBox="0 0 5 5" className="w-[5px] h-[5px]"><circle cx="2.500" cy="2.500" r="2.500" fill="currentColor" /></svg>
      <svg viewBox="0 0 5 5" className="w-[5px] h-[5px]"><path d="M0 0l5 2.500L0 5z" fill="currentColor" /></svg>
    </div>
    <div className="flex h-[14px] shrink-0 bg-[#434343] text-[5px]">
      <button className="w-[22px] shrink-0 text-[#aaa]">Links</button>
      <button className="w-[28px] shrink-0 bg-[#505050] font-bold">Libraries</button>
      <button className="pl-[2px] text-[#aaa]">Documen</button>
    </div>
    <div className="shrink-0 px-[5px] pt-[5px]"><div className="h-[8px] bg-[#484848]" /></div>
    <label className="flex items-center gap-[5px] h-[15px] shrink-0 mt-[4px] pl-[4px] border-b border-[#484848]">
      <Magnifier />
      <input placeholder="Search Current Library" aria-label="Search library" className="flex-1 min-w-0 text-[5px] bg-transparent outline-none placeholder:text-[#626262]" />
    </label>
    <svg viewBox="0 0 30 22" className="w-[26px] h-[20px] shrink-0 mt-[38px] ml-[48px] text-[#8b8b8b]">
      <path d="M8.500 20.500a7 7 0 0 1-1-13.800A9.500 9.500 0 0 1 25.500 8a6.500 6.500 0 0 1-2 12.500z" fill="none" stroke="currentColor" strokeWidth="2" />
      <path d="M15 16.500h-6a3.500 3.500 0 1 1 2.500-6l6 6M12 6.500c3-3 8-1.500 9 3v7M17 9l5 6" fill="none" stroke="currentColor" strokeWidth="1.900" />
    </svg>
    <p className="mt-[4px] pl-[18px] text-[#c2c2c2]">To use Creative Clou<br />please sign in to Crea</p>
  </section>
);

const TaskIcon: React.FC<{ name: string }> = ({ name }) => (
  <svg viewBox="0 0 24 24" className="w-[13px] h-[13px]">
    {name === 'Cortana' && <circle cx="12" cy="12" r="7" fill="none" stroke="#fff" strokeWidth="2.400" />}
    {name === 'Task View' && <path d="M4 4v3h11V4M4 20v-3h11v3M4 9.500h11v5H4zM19 4v4M19 16v4M18 10.500h3v3h-3z" fill="none" stroke="#ddd" strokeWidth="1.700" />}
    {name === 'File Explorer' && <g><path d="M1 3h8l2 2h11v15H1z" fill="#e9b93c" /><path d="M1 7h21v13H1z" fill="#f8dc7a" /><path d="M5 13h14v8h-4v-4H9v4H5z" fill="#4a9bd4" /></g>}
    {name === 'Chrome' && <g><circle cx="12" cy="12" r="11" fill="#f0c42d" /><path d="M2.500 6.500A11 11 0 0 1 22 7H12a5 5 0 0 0-4.500 7z" fill="#dc4437" /><path d="M2.500 6.500A11 11 0 0 0 11 23l5-8.500a5 5 0 0 1-8.500-.5z" fill="#2f9e55" /><circle cx="12" cy="12" r="5.300" fill="#fff" /><circle cx="12" cy="12" r="4" fill="#3b7ded" /></g>}
    {name === 'Edge' && <g><circle cx="12" cy="12" r="11" fill="#1874c5" /><path d="M1.500 10C3 3 8 1 12 1c7 0 11 5 11 9.500 0 4-3 5.500-6 5.500-2.500 0-3.500-1.500-2.500-3C16 10 12.500 7 9 7s-6 1.500-7.500 3z" fill="#45c6b6" /><path d="M9 11c-2 5 2 11 8 10.500-4 3-11 1.500-13-4C3 13 5 9 10 8.500" fill="#12529d" /></g>}
    {name === 'Mail' && <g><path d="M1 9l11-8 11 8v13H1z" fill="#1673bd" /><path d="M4 7h16v9H4z" fill="#eef7fd" /><path d="M1 9l11 8 11-8v13H1z" fill="#2fa4e6" /></g>}
  </svg>
);

const Taskbar: React.FC = () => (
  <footer className="relative z-20 flex items-stretch h-[21px] shrink-0 bg-[#1a1a1a] text-[6px] leading-[8px] text-[#eee]">
    <button aria-label="Start" className="flex items-center justify-center w-[25px]">
      <svg viewBox="0 0 9 9" className="w-[9px] h-[9px]"><path d="M0 1.200L4 .6v3.600H0zM4.600.5L9 0v4.200H4.600zM0 4.800h4v3.600L0 7.800zM4.600 4.800H9V9l-4.400-.5z" fill="#fff" /></svg>
    </button>
    <label className="flex items-center gap-[5px] w-[176px] pl-[6px] bg-[#f1f1f1] text-[#333]">
      <Magnifier className="w-[9px] h-[9px]" />
      <input aria-label="Search" placeholder="Type here to search" className="w-full min-w-0 text-[7px] bg-transparent outline-none placeholder:text-[#444]" />
    </label>
    {['Cortana', 'Task View', 'File Explorer', 'Chrome', 'Edge', 'Mail'].map((name) => (
      <button
        key={name}
        aria-label={name}
        className={`flex items-center justify-center w-[25px] border-b-2 ${
          name === 'File Explorer' ? 'bg-[#464646] border-[#79b4e6]' : name === 'Chrome' ? 'border-[#79b4e6]' : 'border-transparent'
        }`}
      >
        <TaskIcon name={name} />
      </button>
    ))}
    <button className="flex items-center justify-center w-[25px] px-[2px]">
      <span className="flex items-center justify-center w-full h-full border-b-2 border-[#79b4e6]"><span className="w-[11px] h-[11px] leading-[9px] border border-[#d6761b] bg-[#2c1603] text-[#ee8a1d] font-bold">Ai</span></span>
    </button>
    <button className="flex items-center justify-center w-[25px] px-[2px]">
      <span className="flex items-center justify-center w-full h-full border-b-2 border-[#79b4e6]"><span className="w-[11px] h-[11px] leading-[9px] border border-[#2ba6b8] bg-[#06222b] text-[#35bdd0] font-bold">Ps</span></span>
    </button>
    <div className="flex items-center ml-auto">
      <button aria-label="Hidden icons"><Chevron dir="up" className="w-[7px] h-[7px]" /></button>
      <svg viewBox="0 0 10 8" className="w-[9px] h-[7px] ml-[8px]"><path d="M2 2h7v5H2z" fill="#eee" /><path d="M0 0h3v3H0zM9 3.500h1v2H9z" fill="#ccc" /></svg>
      <svg viewBox="0 0 8 8" className="w-[7px] h-[7px] ml-[9px]"><path d="M.5 7.500l7-7v7z" fill="#555" /><path d="M1 7.500a6 6 0 0 1 6.500-6M3.500 7.500a4 4 0 0 1 4-3.500" fill="none" stroke="#ddd" /></svg>
      <button className="ml-[7px]">ENG</button>
      <button className="w-[36px] ml-[3px] text-center leading-[9px]">7:24 PM<br />2020-10-30</button>
      <button aria-label="Notifications" className="ml-[5px] mr-[6px]">
        <svg viewBox="0 0 12 12" className="w-[12px] h-[12px]"><path d="M0 1h8v6H4L2.500 8.500V7H0z" fill="#eee" /><circle cx="7.800" cy="7.600" r="3.600" fill="#333" stroke="#999" /><path d="M7 6.500l1-.8v4" fill="none" stroke="#eee" /></svg>
      </button>
      <div className="w-px h-[21px] mr-[2px] bg-[#555]" />
    </div>
  </footer>
);

const App: React.FC = () => (
  <div className="relative flex flex-col h-screen overflow-hidden bg-[#444] font-['Open_Sans','Noto_Sans',sans-serif]">
    <MenuBar />
    <ControlBar />
    <main className="relative flex flex-1 min-h-0 border-t border-[#3d3d3d]">
      <Toolbox />
      <div className="flex flex-col flex-1 min-w-0 bg-[#434343]">
        <div className="h-[16px] pl-[4px] text-[6px] leading-[16px] text-[#b5b5b5] whitespace-nowrap">Michelle &amp; Tyler - Wedding Invitation.</div>
        <div className="flex flex-1 min-h-0">
          <div className="flex-1 bg-[#5e5e5e]" />
          <div className="flex flex-col items-center justify-between w-[9px] py-[2px] bg-[#4b4b4b] text-[#999]">
            <Chevron dir="up" className="w-[5px] h-[5px]" />
            <Chevron className="w-[5px] h-[5px]" />
          </div>
        </div>
        <div className="flex items-center gap-[5px] h-[9px] pl-[4px] bg-[#484848] text-[5px] leading-[8px] text-[#d0d0d0]">
          <span className="w-[21px]">116%</span>
          <Chevron className="w-[5px] h-[5px]" />
          <Chevron dir="left" className="w-[5px] h-[5px] opacity-30" />
          <Chevron dir="left" className="w-[5px] h-[5px] opacity-30" />
          <span className="w-[16px]">1</span>
          <Chevron className="w-[5px] h-[5px]" />
          <Chevron dir="right" className="w-[5px] h-[5px] opacity-30" />
          <Chevron dir="right" className="w-[5px] h-[5px] opacity-30" />
          <Chevron dir="right" className="w-[5px] h-[5px] ml-auto mr-[9px]" />
        </div>
      </div>
      <div className="absolute right-0 top-[40px] flex items-start">
        <ColourDock />
        <ActionsDock />
      </div>
      <AlignPanel />
    </main>
    <Explorer />
    <Taskbar />
  </div>
);

export default App;
